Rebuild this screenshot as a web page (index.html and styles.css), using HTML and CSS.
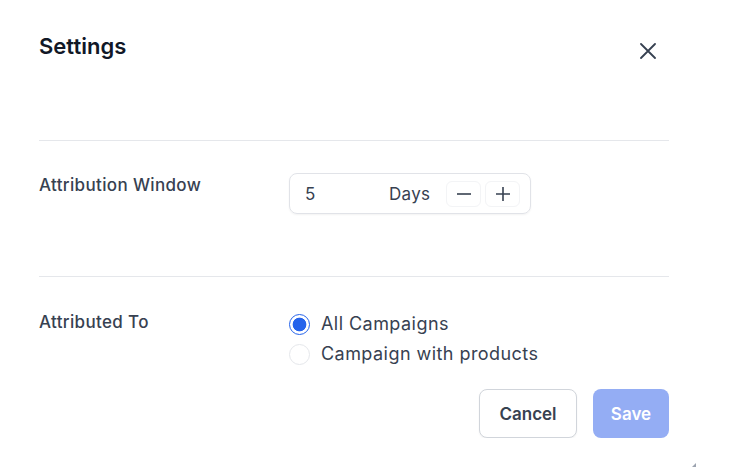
FILE: index.html
```html
<!DOCTYPE html>
<html>
<head>
<meta charset="utf-8">
<link rel="stylesheet" href="styles.css">
</head>
<body>
<div class="modal">
  <div class="header">
    <h1 class="title">Settings</h1>
    <button class="close" aria-label="Close">
      <svg width="16" height="16" viewBox="0 0 16 16"><path d="M1 1L15 15M15 1L1 15" stroke="#374151" stroke-width="1.8" stroke-linecap="round"/></svg>
    </button>
  </div>
  <div class="row row-window">
    <div class="label">Attribution Window</div>
    <div class="stepper">
      <span class="value">5</span>
      <span class="unit">Days</span>
      <button class="step minus"><svg width="16" height="16" viewBox="0 0 16 16"><path d="M1 8H15" stroke="#374151" stroke-width="1.6"/></svg></button>
      <button class="step plus"><svg width="16" height="16" viewBox="0 0 16 16"><path d="M1 8H15M8 1V15" stroke="#374151" stroke-width="1.6"/></svg></button>
    </div>
  </div>
  <div class="row row-to">
    <div class="label">Attributed To</div>
    <div class="radios">
      <label class="radio"><span class="dot checked"></span>All Campaigns</label>
      <label class="radio"><span class="dot"></span>Campaign with products</label>
    </div>
  </div>
  <div class="actions">
    <button class="btn cancel">Cancel</button>
    <button class="btn save">Save</button>
  </div>
</div>
<div class="grip"></div>
</body>
</html>
```
FILE: styles.css
```css
html, body {
  margin: 0;
  padding: 0;
  background: #ffffff;
  font-family: Inter, "Liberation Sans", sans-serif;
  color: #374151;
}
.modal {
  width: 630px;
  padding: 30px 0 0 39px;
}
.header {
  display: flex;
  justify-content: space-between;
  align-items: flex-start;
  height: 110px;
  border-bottom: 1px solid #e5e7eb;
}
.title {
  margin: 0;
  font-size: 22px;
  line-height: 32px;
  font-weight: 600;
  color: #111827;
}
.close {
  width: 40px;
  height: 40px;
  margin: 1px 1px 0 0;
  border: none;
  background: none;
  padding: 0;
  display: flex;
  align-items: center;
  justify-content: center;
}
.row {
  display: flex;
  align-items: flex-start;
  padding-top: 33px;
}
.row-window {
  padding-top: 32px;
  height: 103px;
  border-bottom: 1px solid #e5e7eb;
}
.label {
  width: 250px;
  font-size: 17px;
  line-height: 24px;
  font-weight: 500;
  letter-spacing: 0.35px;
  color: #374151;
}
.stepper {
  box-sizing: border-box;
  width: 242px;
  height: 41px;
  border: 1px solid #e1e3e8;
  border-radius: 8px;
  box-shadow: 0 1px 2px rgba(0,0,0,0.05);
  display: flex;
  align-items: center;
  padding-left: 15px;
  font-size: 17px;
  color: #374151;
}
.value {
  width: 84px;
}
.unit {
  width: 57px;
  letter-spacing: 0.3px;
}
.step {
  width: 35px;
  height: 26px;
  margin-right: 4px;
  border: 1px solid #f3f4f6;
  border-radius: 6px;
  background: #ffffff;
  padding: 0;
  display: flex;
  align-items: center;
  justify-content: center;
}
.radios {
  display: flex;
  flex-direction: column;
  margin-top: -1px;
}
.radio {
  display: flex;
  align-items: center;
  font-size: 18px;
  line-height: 30px;
  letter-spacing: 0.45px;
  color: #374151;
}
.dot {
  box-sizing: border-box;
  width: 21px;
  height: 21px;
  border-radius: 50%;
  border: 1px solid #e5e7eb;
  margin-right: 11px;
  background: #fff;
}
.dot.checked {
  border: 1.5px solid #2563eb;
  background: radial-gradient(circle, #2563eb 0 6.5px, #ffffff 7.2px);
}
.actions {
  display: flex;
  justify-content: flex-end;
  gap: 16px;
  margin-top: 20px;
}
.btn {
  height: 49px;
  border-radius: 8px;
  font-family: Inter, "Liberation Sans", sans-serif;
  font-size: 17px;
  font-weight: 600;
  padding: 0;
}
.cancel {
  width: 98px;
  background: #ffffff;
  border: 1px solid #d1d5db;
  color: #374151;
  box-shadow: 0 1px 2px rgba(0,0,0,0.05);
}
.save {
  width: 76px;
  background: #94adf4;
  border: none;
  color: #ffffff;
}
.grip {
  position: absolute;
  left: 692px;
  top: 463px;
  width: 0;
  height: 0;
  border-left: 4px solid transparent;
  border-bottom: 4px solid #9ca3af;
}
```
